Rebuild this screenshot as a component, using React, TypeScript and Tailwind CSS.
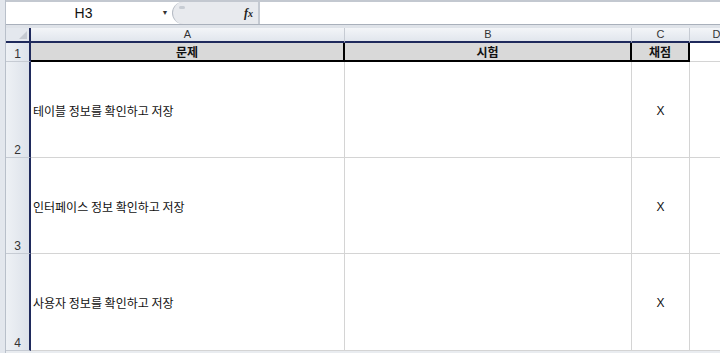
import React from "react";

const kr = { fontFamily: '"Noto Sans CJK KR", "Noto Sans", sans-serif' };

function RowHead({ n }: { n: string }) {
  return (
    <div
      className="flex items-end justify-center border-b border-[#c6cbd3] border-r-2 border-r-[#1f2a5c] bg-gradient-to-r from-[#eef1f5] to-[#dde2ea] text-[12px] text-[#333] leading-none pb-[1px]"
      style={{ fontFamily: '"Liberation Sans", Arial, sans-serif' }}
    >
      {n}
    </div>
  );
}

export default function App() {
  const rows = [
    { n: "2", t: "테이블 정보를 확인하고 저장" },
    { n: "3", t: "인터페이스 정보 확인하고 저장" },
    { n: "4", t: "사용자 정보를 확인하고 저장" },
  ];
  return (
    <div className="w-[720px] h-[353px] overflow-hidden bg-[#e9ecf0] flex">
      <div className="w-[6px] shrink-0 border-r border-[#b9c0ca] bg-[#e3e7ed]" />
      <div className="flex-1 flex flex-col min-w-0">
        {/* formula bar */}
        <div className="h-[25px] shrink-0 flex border-t-2 border-[#c3c8d0] bg-white border-b border-b-[#a9b0bb]">
          <div
            className="w-[155px] flex items-center justify-center text-[14px] text-[#111]"
            style={{ fontFamily: '"Liberation Sans", Arial, sans-serif' }}
          >
            H3
          </div>
          <div className="w-[8px] flex items-center justify-center text-[7px] text-[#333]">▼</div>
          <div className="w-[86px] ml-[3px] rounded-l-full bg-[#e8eaee] border-l border-[#b5bbc4] flex items-center relative">
            <div className="absolute left-[6px] top-[4px] w-[6px] h-[3px] rounded-full bg-[#c7ccd3]" />
            <span
              className="ml-auto mr-[5px] italic font-bold text-[12px] text-[#222]"
              style={{ fontFamily: '"Liberation Serif", serif' }}
            >
              f<span className="text-[10px]">x</span>
            </span>
          </div>
          <div className="w-[2px] bg-[#c5cad2]" />
          <div className="flex-1 bg-white" />
        </div>
        <div className="h-[3px] shrink-0 bg-[#dfe3e9]" />
        {/* grid */}
        <div
          className="grid grid-cols-[25px_314px_287px_58px_54px] grid-rows-[15px_19px_96px_96px_97px] bg-white"
          style={{ fontFamily: '"Liberation Sans", Arial, sans-serif' }}
        >
          {/* column header row */}
          <div className="border-r-2 border-r-[#1f2a5c] border-b-2 border-b-[#1f2a5c] bg-[#e4e8ee] relative">
            <div className="absolute right-[2px] bottom-[2px] w-0 h-0 border-l-[8px] border-l-transparent border-b-[8px] border-b-[#c5cad2]" />
          </div>
          {["A", "B", "C", "D"].map((c) => (
            <div
              key={c}
              className="flex items-center justify-center text-[11px] text-[#333] leading-none bg-gradient-to-b from-[#f3f5f8] to-[#e1e6ed] border-r border-r-[#c6cbd3] border-b-2 border-b-[#1f2a5c]"
            >
              {c}
            </div>
          ))}
          {/* row 1 */}
          <RowHead n="1" />
          {["문제", "시험", "채점"].map((t) => (
            <div
              key={t}
              className="flex items-center justify-center bg-[#d9d9d9] border-r-2 border-r-black border-b-2 border-b-black text-[12px] font-bold text-[#111]"
              style={kr}
            >
              {t}
            </div>
          ))}
          <div className="border-b border-[#d4d4d4]" />
          {rows.map((r) => (
            <React.Fragment key={r.n}>
              <RowHead n={r.n} />
              <div
                className="flex items-center pl-[2px] pt-[2px] border-r border-b border-[#d4d4d4] text-[12px] text-[#111]"
                style={kr}
              >
                {r.t}
              </div>
              <div className="border-r border-b border-[#d4d4d4]" />
              <div className="flex items-center justify-center pt-[2px] border-r border-b border-[#d4d4d4] text-[12px] text-[#111]">
                X
              </div>
              <div className="border-b border-[#d4d4d4]" />
            </React.Fragment>
          ))}
        </div>
      </div>
    </div>
  );
}
